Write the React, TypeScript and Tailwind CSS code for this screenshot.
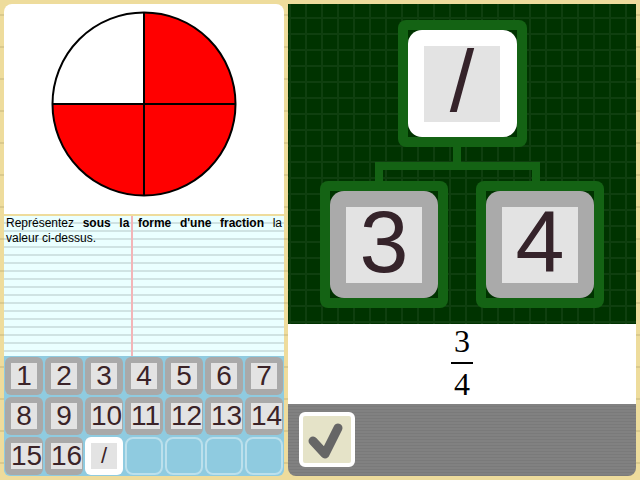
import React from "react";

function Key({ label }: { label: string }) {
  return (
    <div className="rounded-[6px] bg-[#a9a9a9] p-[6px] flex">
      <div className="flex-1 bg-[#e3e3e3] flex items-center justify-center">
        <span className="text-[28px] leading-none text-[#3b2328]">{label}</span>
      </div>
    </div>
  );
}

function SlashKey() {
  return (
    <div className="rounded-[6px] bg-white p-[6px] flex">
      <div className="flex-1 bg-[#e3e3e3] flex items-center justify-center">
        <span className="text-[22px] leading-none text-[#3b2328]">/</span>
      </div>
    </div>
  );
}

function EmptySlot() {
  return <div className="rounded-[8px] border-2 border-white/40" />;
}

function TreeBox({ label, light, w }: { label: string; light: boolean; w: string }) {
  return (
    <div className={`${w} h-[127px] rounded-[8px] bg-[#146314] p-[10px] flex`}>
      <div className="flex-1 bg-[#003300] flex">
        <div
          className={`flex-1 rounded-[14px] flex items-center justify-center ${
            light ? "bg-white" : "bg-[#aaaaaa]"
          }`}
        >
          <div className="w-[76px] h-[76px] bg-[#e3e3e3] flex items-center justify-center pb-[6px]">
            <span className="text-[88px] leading-none text-[#35232a]">{label}</span>
          </div>
        </div>
      </div>
    </div>
  );
}

export default function App() {
  const row1 = ["1", "2", "3", "4", "5", "6", "7"];
  const row2 = ["8", "9", "10", "11", "12", "13", "14"];
  return (
    <div className="w-[640px] h-[480px] overflow-hidden flex gap-1 p-1 bg-[#eedc9c] bg-[image:repeating-linear-gradient(to_bottom,transparent_0px,transparent_14px,#dac98c_14px,#dac98c_16px,transparent_16px,transparent_32px)] font-['Liberation_Sans',Arial,sans-serif]">
      {/* Left column */}
      <div className="w-[280px] flex flex-col">
        <div className="h-[210px] bg-white rounded-t-lg flex">
          <svg width="280" height="210" viewBox="0 0 280 210">
            <path d="M140,100 L140,8.5 A91.5,91.5 0 0,1 231.5,100 Z" fill="#ff0000" />
            <path d="M140,100 L231.5,100 A91.5,91.5 0 0,1 140,191.5 Z" fill="#ff0000" />
            <path d="M140,100 L140,191.5 A91.5,91.5 0 0,1 48.5,100 Z" fill="#ff0000" />
            <circle cx="140" cy="100" r="91.5" fill="none" stroke="#000" strokeWidth="2" />
            <line x1="140" y1="8.5" x2="140" y2="191.5" stroke="#000" strokeWidth="2" />
            <line x1="48.5" y1="100" x2="231.5" y2="100" stroke="#000" strokeWidth="2" />
          </svg>
        </div>
        <div className="h-[2px]" />
        <div className="h-[140px] bg-[#eaffff] bg-[image:linear-gradient(to_right,transparent_127px,#f3b5b8_127px,#f3b5b8_129px,transparent_129px),repeating-linear-gradient(to_bottom,#eaffff_0px,#eaffff_6px,#cfe3e3_6px,#cfe3e3_8px)]">
          <p className="px-[2px] text-[12px] leading-[15px] text-justify text-black">
            Représentez <b>sous la forme d'une fraction</b> la valeur ci-dessus.
          </p>
        </div>
        <div className="h-[120px] bg-[#8fcbe0] rounded-b-md grid grid-cols-7 grid-rows-3 gap-[2px] p-[1px]">
          {row1.map((k) => (
            <Key key={k} label={k} />
          ))}
          {row2.map((k) => (
            <Key key={k} label={k} />
          ))}
          <Key label="15" />
          <Key label="16" />
          <SlashKey />
          <EmptySlot />
          <EmptySlot />
          <EmptySlot />
          <EmptySlot />
        </div>
      </div>

      {/* Right column */}
      <div className="w-[348px] flex flex-col">
        <div className="h-[320px] bg-[#003300] bg-[image:linear-gradient(to_right,#0f3f0f_2px,transparent_2px),linear-gradient(to_bottom,transparent_13px,#0f3f0f_13px,#0f3f0f_15px,transparent_15px)] bg-[size:16px_16px] bg-[position:1px_0px] flex flex-col items-center pt-[16px]">
          <TreeBox label="/" light={true} w="w-[129px]" />
          <svg width="348" height="34" viewBox="0 0 348 34" className="shrink-0">
            <rect x="165" y="0" width="8" height="16" fill="#146314" />
            <rect x="87" y="15" width="165" height="8" fill="#146314" />
            <rect x="87" y="22" width="8" height="12" fill="#146314" />
            <rect x="244" y="22" width="8" height="12" fill="#146314" />
          </svg>
          <div className="flex gap-[28px]">
            <TreeBox label="3" light={false} w="w-[128px]" />
            <TreeBox label="4" light={false} w="w-[128px]" />
          </div>
        </div>
        <div className="h-[80px] bg-white flex flex-col items-center pt-px font-['Liberation_Serif','Times_New_Roman',serif] text-black">
          <span className="text-[32px] leading-none">3</span>
          <div className="mt-[5px] w-[22px] h-[2px] bg-black" />
          <span className="mt-[4px] text-[32px] leading-none">4</span>
        </div>
        <div className="h-[72px] rounded-b-lg bg-[#7f7f7f] bg-[image:repeating-linear-gradient(to_bottom,#818181_0px,#818181_2px,#7a7a7a_2px,#7a7a7a_3px)] pl-[11px] pt-[8px]">
          <div className="w-[56px] h-[55px] rounded-[6px] border-4 border-white bg-[#e5e3c8] flex">
            <svg width="48" height="47" viewBox="0 0 48 47">
              <polyline
                points="10,25 22,38 35,12"
                fill="none"
                stroke="#666666"
                strokeWidth="9"
                strokeLinecap="round"
                strokeLinejoin="round"
              />
            </svg>
          </div>
        </div>
      </div>
    </div>
  );
}
